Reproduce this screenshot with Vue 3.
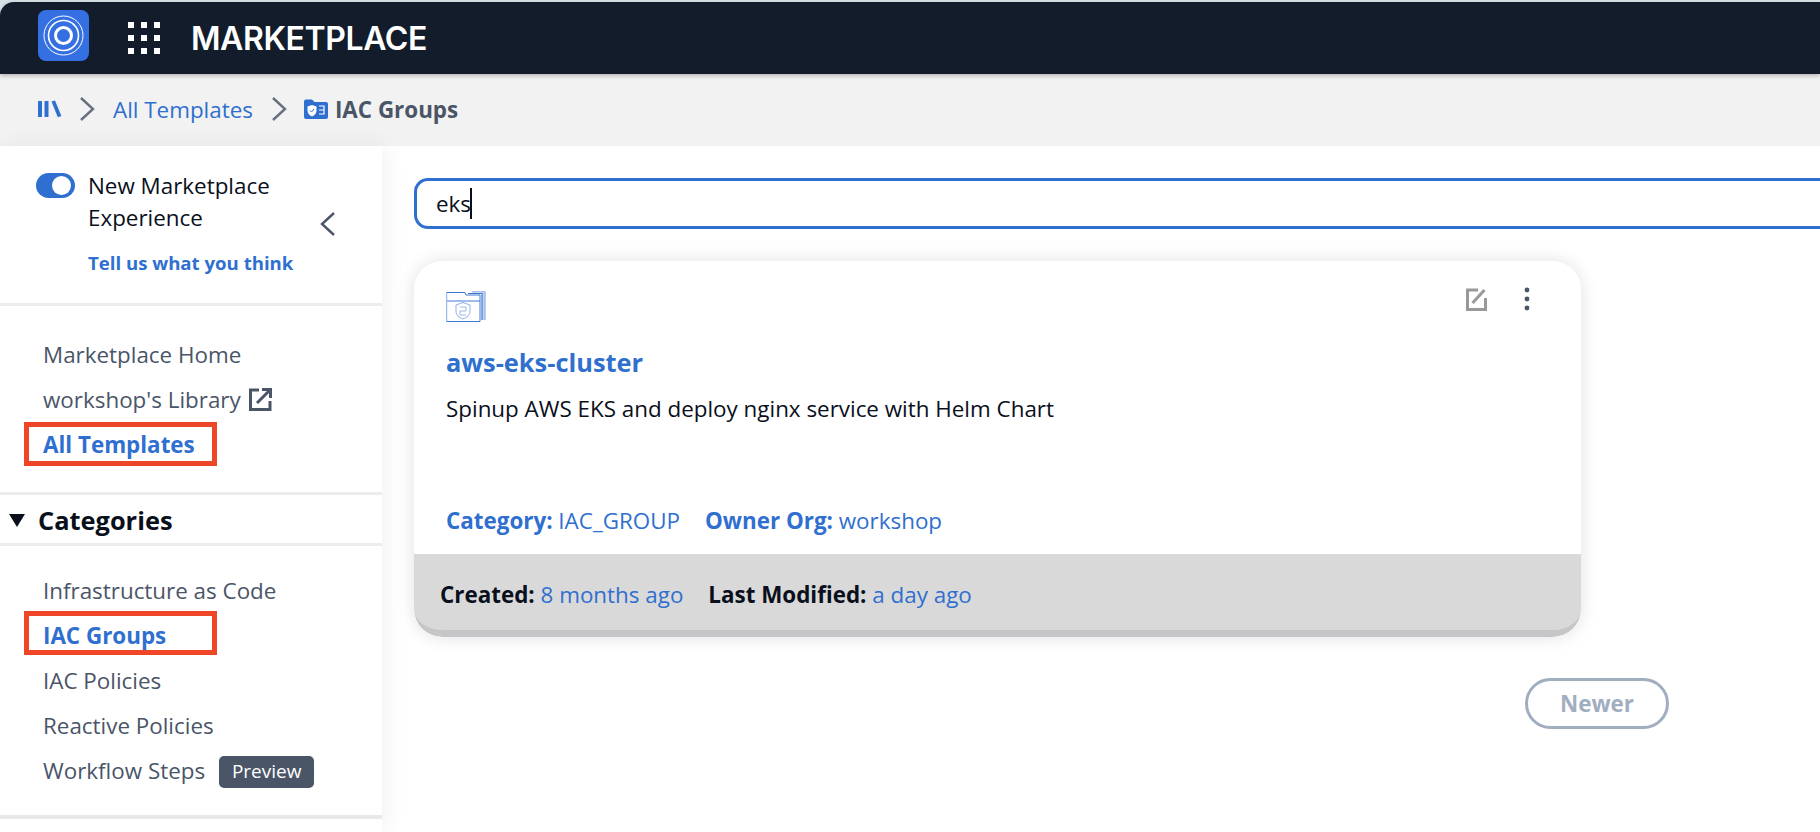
<script setup>
const topLinks = ['Marketplace Home']
const categories = ['Infrastructure as Code']
const moreCategories = ['IAC Policies', 'Reactive Policies']
</script>

<template>
	<div class="page">
		<header class="topbar">
			<svg class="logo" width="51" height="51" viewBox="0 0 51 51">
				<rect width="51" height="51" rx="8" fill="#3570e3" />
				<circle cx="25.500" cy="25.500" r="19.500" fill="none" stroke="#fff" stroke-width="1" />
				<circle cx="25.500" cy="25.500" r="15" fill="none" stroke="#fff" stroke-width="1.600" />
				<circle cx="25.500" cy="25.500" r="8" fill="none" stroke="#fff" stroke-width="3" />
			</svg>
			<div class="dots">
				<span v-for="n in 9" :key="n"></span>
			</div>
			<div class="app_name">MARKETPLACE</div>
		</header>

		<nav class="crumbs">
			<svg width="24" height="18" viewBox="0 0 24 18" fill="#2f6fd0">
				<rect x="0" y="1" width="4" height="16" rx="0.5" />
				<rect x="6.5" y="1" width="4" height="16" rx="0.5" />
				<path d="M13.5 1.6 17 0.6 23.4 16 19.8 17.2z" />
			</svg>
			<svg class="chev" width="16" height="26" viewBox="0 0 16 26">
				<path d="M2 2 14 13 2 24" fill="none" stroke="#666f7d" stroke-width="2.4" />
			</svg>
			<a class="crumb_link">All Templates</a>
			<svg class="chev second_chev" width="16" height="26" viewBox="0 0 16 26">
				<path d="M2 2 14 13 2 24" fill="none" stroke="#666f7d" stroke-width="2.4" />
			</svg>
			<svg class="crumb_folder" width="24" height="20" viewBox="0 0 24 20">
				<path d="M0 2.500A2 2 0 0 1 2 .5h6l2.500 2.500H22a2 2 0 0 1 2 2V18a2 2 0 0 1-2 2H2a2 2 0 0 1-2-2z" fill="#2f6fd0" />
				<path d="M3.500 7.500 8 6l4.500 1.500v4c0 3-2 5-4.500 6-2.500-1-4.500-3-4.500-6z" fill="#fff" />
				<path d="M6 11.500 7.500 13 10 10" fill="none" stroke="#2f6fd0" stroke-width="1" />
				<path d="M15 7h5v4h-5M20 11v4h-5" fill="none" stroke="#fff" stroke-width="1.200" />
			</svg>
			<strong class="crumb_current">IAC Groups</strong>
		</nav>

		<div class="body">
			<aside class="sidebar">
				<section class="experience">
					<div class="toggle"><span></span></div>
					<div class="experience_text">
						<div class="experience_title">New Marketplace<br />Experience</div>
						<a class="feedback">Tell us what you think</a>
					</div>
					<svg class="collapse" width="16" height="26" viewBox="0 0 16 26">
						<path d="M14 2 2 13 14 24" fill="none" stroke="#4a5568" stroke-width="2.4" />
					</svg>
				</section>

				<ul class="menu first">
					<li v-for="item in topLinks" :key="item">{{ item }}</li>
					<li>
						workshop's Library
						<svg class="ext" width="23" height="23" viewBox="0 0 23 23">
							<path d="M10 2H1.500v19.500H21V13" fill="none" stroke="#4a5568" stroke-width="3" />
							<path d="M8 15 20 3M13 1.500h8.500V10" fill="none" stroke="#4a5568" stroke-width="3" />
						</svg>
					</li>
					<li class="active"><span class="mark">All Templates</span></li>
				</ul>

				<div class="cat_head">
					<i class="caret"></i>
					<span>Categories</span>
				</div>

				<ul class="menu second">
					<li v-for="item in categories" :key="item">{{ item }}</li>
					<li class="active"><span class="mark">IAC Groups</span></li>
					<li v-for="item in moreCategories" :key="item">{{ item }}</li>
					<li>Workflow Steps <span class="badge">Preview</span></li>
				</ul>
			</aside>

			<main class="content">
				<div class="search">
					<span class="search_text">eks</span><i class="cursor"></i>
				</div>

				<article class="card">
					<div class="card_top">
						<div class="card_actions">
							<svg width="21" height="24" viewBox="0 0 21 24">
								<path d="M12 3H1.500v19.500h18V11" fill="none" stroke="#999" stroke-width="3" />
								<path d="M6.500 16 18.500 3" fill="none" stroke="#999" stroke-width="3" />
							</svg>
							<svg width="8" height="24" viewBox="0 0 8 24" fill="#4a5568">
								<circle cx="4" cy="3" r="2.400" />
								<circle cx="4" cy="12" r="2.400" />
								<circle cx="4" cy="21" r="2.400" />
							</svg>
						</div>
						<svg class="card_icon" width="40" height="31" viewBox="0 0 40 31" fill="none">
							<path d="M36 1.500h3V29h-3z" fill="#c3d5f3" />
							<path d="M26 .8h13V29" stroke="#8fb0e8" stroke-width="1.200" />
							<path d="M22 2.500h14V29" stroke="#3f78d4" stroke-width="1.200" />
							<path d="M.5 1.500H19L20 4h14v26.500H.5zM.5 10h33.500" stroke="#3f78d4" stroke-width="1" />
							<path d="M.5 1.500v29" stroke="#9dbbec" stroke-width="1.500" />
							<path d="M10 14 17 11.500l7 2.500v6c0 4-3 6.500-7 8-4-1.500-7-4-7-8z" stroke="#8fb0e8" stroke-width="1" />
							<path d="M14 16h6v4h-6v4h6" stroke="#9dbbec" stroke-width="1" />
						</svg>
						<h2 class="card_title">aws-eks-cluster</h2>
						<p class="card_desc">Spinup AWS EKS and deploy nginx service with Helm Chart</p>
						<div class="card_meta">
							<span><b>Category:</b> IAC_GROUP</span>
							<span><b>Owner Org:</b> workshop</span>
						</div>
					</div>
					<div class="card_foot">
						<span><b>Created:</b> <em>8 months ago</em></span>
						<span><b>Last Modified:</b> <em>a day ago</em></span>
					</div>
				</article>

				<div class="pager">
					<button class="newer">Newer</button>
				</div>
			</main>
		</div>
	</div>
</template>

<style scoped>
.page {
	height: 832px;
	overflow: hidden;
	padding-top: 2px;
	box-sizing: border-box;
	background: #d3e1e6;
	font-family: 'Open Sans', 'Noto Sans', sans-serif;
	font-size: 22.4px;
	color: #0a0f1c;
}
.topbar {
	display: flex;
	align-items: center;
	height: 72px;
	background: #121c2b;
	border-radius: 14px 0 0 0;
	box-shadow: 0 2px 4px rgba(0, 0, 0, 0.25);
	position: relative;
}
.logo {
	margin: -5px 0 0 38px;
}
.dots {
	display: grid;
	grid-template-columns: repeat(3, 6px);
	gap: 7px;
	margin-left: 39px;
}
.dots span {
	width: 6px;
	height: 6px;
	background: #fff;
}
.app_name {
	margin-left: 31px;
	font-family: Inter, sans-serif;
	font-size: 32px;
	font-weight: 600;
	color: #fff;
	letter-spacing: -0.4px;
}
.crumbs {
	display: flex;
	align-items: center;
	height: 72px;
	padding: 0 0 2px 38px;
	box-sizing: border-box;
	background: #f2f2f2;
}
.chev {
	margin-left: 17px;
}
.second_chev {
	margin-left: 18px;
}
.crumb_link {
	margin-left: 18px;
	color: #2f6fd0;
}
.crumb_folder {
	margin-left: 17px;
}
.crumb_current {
	margin-left: 7px;
	color: #4a5568;
	font-weight: 700;
}
.body {
	display: flex;
	height: 686px;
	background: #fff;
}
.sidebar {
	width: 382px;
	flex: none;
	background: #fff;
	box-shadow: 3px 0 22px rgba(0, 0, 0, 0.06);
	position: relative;
}
.experience {
	display: flex;
	height: 160px;
	padding: 27px 0 0 36px;
	box-sizing: border-box;
	border-bottom: 3px solid #ececec;
	position: relative;
	line-height: 32px;
}
.toggle {
	width: 39px;
	height: 25px;
	border-radius: 13px;
	background: #2f6fd0;
	position: relative;
	flex: none;
}
.toggle span {
	position: absolute;
	top: 3px;
	right: 4px;
	width: 19px;
	height: 19px;
	border-radius: 50%;
	background: #fff;
}
.experience_text {
	margin-left: 13px;
}
.experience_title {
	margin-top: -3px;
}
.feedback {
	display: block;
	margin-top: 17px;
	font-size: 18.6px;
	font-weight: 700;
	line-height: 24px;
	color: #2f6fd0;
}
.collapse {
	position: absolute;
	left: 320px;
	top: 65px;
}
.menu {
	list-style: none;
	margin: 0;
	padding: 0 0 0 43px;
	color: #4a5568;
	line-height: 45px;
}
.menu.first {
	padding-top: 26px;
	height: 189px;
	box-sizing: border-box;
	border-bottom: 3px solid #ececec;
}
.menu.second {
	padding-top: 22px;
	height: 273px;
	box-sizing: border-box;
	border-bottom: 4px solid #e8e9eb;
}
.menu li {
	height: 45px;
	white-space: nowrap;
}
.ext {
	vertical-align: -3px;
	margin-left: 2px;
}
.active {
	color: #2f6fd0;
	font-weight: 700;
	position: relative;
}
.mark::after {
	content: '';
	position: absolute;
	left: -19px;
	top: 0;
	width: 193px;
	height: 44px;
	box-sizing: border-box;
	border: 5px solid #f04628;
}
.second .mark::after {
	top: -2px;
}
.cat_head {
	display: flex;
	align-items: center;
	height: 46px;
	padding: 2px 0 0 9px;
	border-bottom: 3px solid #ececec;
	font-size: 25.4px;
	font-weight: 700;
}
.caret {
	width: 0;
	height: 0;
	border-left: 8px solid transparent;
	border-right: 8px solid transparent;
	border-top: 13px solid #0a0f1c;
	margin-right: 13px;
}
.badge {
	display: inline-block;
	margin-left: 8px;
	padding: 0 13px;
	height: 32px;
	line-height: 31px;
	border-radius: 5px;
	background: #4a5568;
	color: #fff;
	font-size: 19px;
	vertical-align: 1px;
}
.content {
	flex: 1;
	min-width: 0;
	padding: 32px 0 0 32px;
}
.search {
	display: flex;
	align-items: center;
	height: 51px;
	margin-right: -40px;
	padding-left: 19px;
	box-sizing: border-box;
	border: 3px solid #2f6fd0;
	border-radius: 14px;
	background: #fff;
}
.cursor {
	width: 2px;
	height: 31px;
	margin-left: -1px;
	background: #0a0f1c;
}
.card {
	width: 1167px;
	margin-top: 32px;
	border-radius: 28px;
	background: #fff;
	box-shadow: 0 0 18px rgba(0, 0, 0, 0.12);
	overflow: hidden;
}
.card_top {
	height: 293px;
	padding: 30px 32px 0;
	box-sizing: border-box;
	position: relative;
}
.card_actions {
	position: absolute;
	top: 26px;
	right: 50px;
	display: flex;
	gap: 36px;
}
.card_icon {
	display: block;
}
.card_title {
	margin: 23px 0 0;
	font-size: 25.4px;
	font-weight: 700;
	line-height: 34px;
	color: #2f6fd0;
}
.card_desc {
	margin: 15px 0 0;
	line-height: 30px;
}
.card_meta {
	display: flex;
	gap: 25px;
	margin-top: 81px;
	color: #2f6fd0;
}
.card_foot {
	display: flex;
	gap: 25px;
	align-items: center;
	height: 72px;
	padding: 4px 0 0 26px;
	background: #d9d9d9;
	border-bottom: 7px solid #c6c6c8;
	border-radius: 0 0 28px 28px;
}
.card_foot em {
	font-style: normal;
	color: #2f6fd0;
}
.pager {
	width: 1255px;
	display: flex;
	justify-content: flex-end;
	margin-top: 41px;
}
.newer {
	width: 144px;
	height: 51px;
	border: 3px solid #a0aec0;
	border-radius: 26px;
	background: #fff;
	color: #a0aec0;
	font-family: inherit;
	font-size: 22.4px;
	font-weight: 700;
}
</style>
